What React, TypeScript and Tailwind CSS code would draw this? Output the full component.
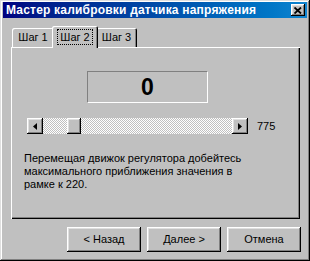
import React from "react";

const raised =
  "shadow-[inset_-1px_-1px_#000,inset_1px_1px_#fff,inset_-2px_-2px_#808080,inset_2px_2px_#dfdfdf]";

function Arrow({ dir }: { dir: "left" | "right" }) {
  return (
    <svg width="4" height="7" viewBox="0 0 4 7">
      {dir === "left" ? (
        <path d="M4 0 L0 3.5 L4 7 Z" fill="#000" />
      ) : (
        <path d="M0 0 L4 3.5 L0 7 Z" fill="#000" />
      )}
    </svg>
  );
}

export default function App() {
  return (
    <div
      className="w-[310px] h-[261px] bg-[#c0c0c0] flex flex-col pt-[2px] px-[3px] shadow-[inset_-1px_-1px_#000,inset_1px_1px_#dfdfdf,inset_-2px_-2px_#808080,inset_2px_2px_#fff]"
      style={{ fontFamily: '"Liberation Sans", Arial, sans-serif' }}
    >
      {/* Title bar */}
      <div className="h-[16px] bg-linear-to-r from-[#000080] to-[#1084d0] flex items-center justify-between pl-[3px] pr-[2px]">
        <span className="text-white font-bold text-[12px] leading-none tracking-[0.2px]">
          Мастер калибровки датчика напряжения
        </span>
        <div className={`w-[14px] h-[12px] bg-[#c0c0c0] flex items-center justify-center ${raised}`}>
          <svg width="8" height="7" viewBox="0 0 8 7">
            <path d="M0.5 0.5 L7 6.5 M7 0.5 L0.5 6.5" stroke="#000" strokeWidth="1.8" />
          </svg>
        </div>
      </div>

      {/* Tabs */}
      <div className="mt-[8px] h-[21px] flex items-end pl-[9px] text-[11px] text-black">
        <div className="w-[42px] h-[19px] flex items-center justify-center shadow-[inset_1px_1px_#fff,inset_-1px_0_#000,inset_-2px_0_#808080] rounded-t-[2px] mr-[-2px]">
          Шаг 1
        </div>
        <div className="relative z-10 w-[46px] h-[22px] -mb-px bg-[#c0c0c0] flex items-center justify-center shadow-[inset_1px_1px_#fff,inset_-1px_0_#000,inset_-2px_0_#808080] rounded-t-[2px]">
          <span className="border border-dotted border-black px-[2px] leading-[14px]">Шаг 2</span>
        </div>
        <div className="w-[41px] h-[19px] ml-[-2px] flex items-center justify-center shadow-[inset_1px_1px_#fff,inset_-1px_0_#000,inset_-2px_0_#808080] rounded-t-[2px]">
          Шаг 3
        </div>
      </div>

      {/* Panel */}
      <div className="ml-[8px] mr-[7px] h-[172px] flex flex-col shadow-[inset_1px_1px_#fff,inset_-1px_-1px_#000,inset_-2px_-2px_#808080]">
        <div className="mt-[24px] ml-[76px] w-[121px] h-[32px] border border-t-[#808080] border-l-[#808080] border-b-white border-r-white flex items-center justify-center text-[23px] font-bold text-black leading-none">
          0
        </div>

        <div className="mt-[15px] ml-[16px] flex items-center">
          <div className="w-[221px] h-[16px] flex bg-[repeating-conic-gradient(#c0c0c0_0_25%,#ffffff_0_50%)] bg-[length:2px_2px]">
            <div className={`w-[16px] h-[16px] bg-[#c0c0c0] flex items-center justify-center ${raised}`}>
              <Arrow dir="left" />
            </div>
            <div className={`ml-[24px] w-[14px] h-[16px] bg-[#c0c0c0] ${raised}`} />
            <div className="flex-1" />
            <div className={`w-[16px] h-[16px] bg-[#c0c0c0] flex items-center justify-center ${raised}`}>
              <Arrow dir="right" />
            </div>
          </div>
          <span className="ml-[9px] text-[11px] text-black">775</span>
        </div>

        <p className="mt-[17px] ml-[13px] w-[240px] text-[11px] leading-[13px] text-black">
          Перемещая движок регулятора добейтесь максимального приближения значения в рамке к 220.
        </p>
      </div>

      {/* Buttons */}
      <div className="mt-[8px] flex pl-[64px] gap-[6px] text-[11px] text-black">
        <div className={`w-[74px] h-[25px] flex items-center justify-center ${raised}`}>&lt; Назад</div>
        <div className={`w-[74px] h-[25px] flex items-center justify-center ${raised}`}>Далее &gt;</div>
        <div className={`w-[74px] h-[25px] flex items-center justify-center ${raised}`}>Отмена</div>
      </div>
    </div>
  );
}
